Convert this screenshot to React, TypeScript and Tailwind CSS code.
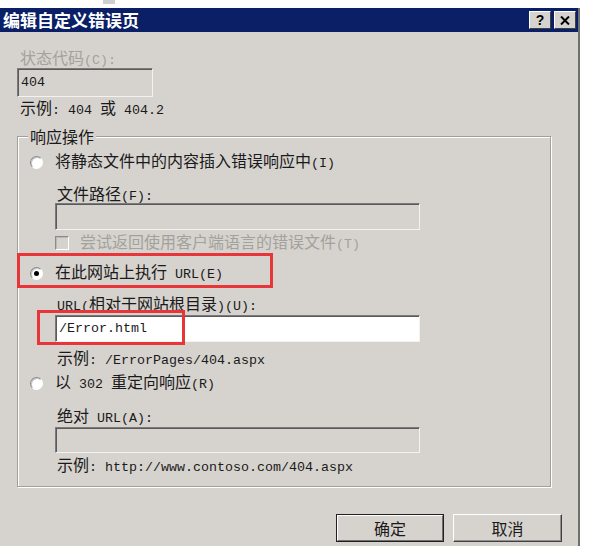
import type { ReactNode } from 'react'

const cjk = "font-['Noto_Sans_CJK_SC',sans-serif]"

function M({ children }: { children: ReactNode }) {
  return <span className="font-['Liberation_Mono',monospace] text-[13.33px]">{children}</span>
}

function Field({ className, children }: { className: string; children?: ReactNode }) {
  return (
    <div
      className={`flex items-center pl-[3px] border border-t-[#7a7a7a] border-l-[#7a7a7a] border-r-[#f2f2f2] border-b-[#f2f2f2] shadow-[inset_1px_1px_0_#5a5a5a] ${className}`}
    >
      {children}
    </div>
  )
}

function Radio({ checked }: { checked?: boolean }) {
  return (
    <span className="flex h-[13px] w-[13px] shrink-0 items-center justify-center rounded-full border border-t-[#8a8a8a] border-l-[#8a8a8a] border-r-white border-b-white bg-white shadow-[inset_1px_1px_0_#c8c8c8]">
      {checked && <span className="h-[5px] w-[5px] rounded-full bg-black" />}
    </span>
  )
}

function Line({ className, children }: { className: string; children: ReactNode }) {
  return <div className={`h-[18px] leading-[18px] whitespace-pre ${className}`}>{children}</div>
}

function Row({ className, children }: { className: string; children: ReactNode }) {
  return <div className={`flex h-[18px] items-center leading-[18px] whitespace-pre ${className}`}>{children}</div>
}

export default function App() {
  return (
    <div className={`h-[546px] w-[596px] overflow-hidden bg-white text-[16px] text-[#1a1a1a] ${cjk}`}>
      <div className="h-[8px]">
        <div className="ml-[103px] h-[4px] w-[12px] bg-[#cfcfcf]" />
      </div>

      <div className="h-[538px] w-[580px] border-r-2 border-r-[#6f6f6f] bg-[#d6d3ce]">
        {/* title bar */}
        <div className="flex h-[24px] items-center justify-between bg-[#0b1f66] pl-[3px] pr-[2px]">
          <span className="text-[17px] font-bold leading-[24px] text-white">编辑自定义错误页</span>
          <div className="flex gap-[3px]">
            <div className="flex h-[18px] w-[22px] items-center justify-center border border-t-white border-l-white border-r-[#404040] border-b-[#404040] bg-[#d6d3ce] font-['Liberation_Sans',sans-serif] text-[14px] font-bold leading-none text-black">
              ?
            </div>
            <div className="flex h-[18px] w-[22px] items-center justify-center border border-t-white border-l-white border-r-[#404040] border-b-[#404040] bg-[#d6d3ce]">
              <svg width="10" height="9" viewBox="0 0 10 9">
                <path d="M1 0.5 L9 8.5 M9 0.5 L1 8.5" stroke="#000" strokeWidth="2" />
              </svg>
            </div>
          </div>
        </div>

        {/* body */}
        <div className="pl-[17px] pt-[16px]">
          <Line className="ml-[3px] text-[#a4a19c]">
            状态代码<M>(C):</M>
          </Line>
          <Field className="mt-[2px] h-[29px] w-[136px] bg-[#d6d3ce]">
            <M>404</M>
          </Field>
          <Line className="mt-[1px] ml-[3px]">
            示例<M>: 404 </M>或<M> 404.2</M>
          </Line>

          {/* group box */}
          <div className="relative mt-[20px] w-[534px] border border-[#a19f9b] pb-[13px] pl-[12px] shadow-[1px_1px_0_#fff,inset_1px_1px_0_#fff]">
            <span className="absolute -top-[10px] left-[10px] bg-[#d6d3ce] px-[2px] leading-[18px]">响应操作</span>

            <Row className="mt-[16px] gap-[12px]">
              <Radio />
              <span>
                将静态文件中的内容插入错误响应中<M>(I)</M>
              </span>
            </Row>
            <Line className="mt-[13px] ml-[27px]">
              文件路径<M>(F):</M>
            </Line>
            <Field className="mt-[1px] ml-[25px] h-[27px] w-[365px] bg-[#d6d3ce]" />
            <Row className="mt-[4px] ml-[25px] gap-[11px] text-[#a4a19c]">
              <span className="h-[14px] w-[14px] shrink-0 border border-t-[#8a8a8a] border-l-[#8a8a8a] border-r-white border-b-white bg-[#d6d3ce] shadow-[inset_1px_1px_0_#b8b8b8]" />
              <span>
                尝试返回使用客户端语言的错误文件<M>(T)</M>
              </span>
            </Row>

            <Row className="mt-[12px] gap-[12px]">
              <Radio checked />
              <span>
                在此网站上执行<M> URL(E)</M>
              </span>
            </Row>
            <Line className="mt-[12px] ml-[27px]">
              <M>URL(</M>相对于网站根目录<M>)(U):</M>
            </Line>
            <Field className="mt-[3px] ml-[25px] h-[27px] w-[365px] bg-white">
              <M>/Error.html</M>
            </Field>
            <Line className="mt-[6px] ml-[27px]">
              示例<M>: /ErrorPages/404.aspx</M>
            </Line>

            <Row className="mt-[8px] gap-[12px]">
              <Radio />
              <span>
                以<M> 302 </M>重定向响应<M>(R)</M>
              </span>
            </Row>
            <Line className="mt-[14px] ml-[27px]">
              绝对<M> URL(A):</M>
            </Line>
            <Field className="mt-[3px] ml-[25px] h-[26px] w-[365px] bg-[#d6d3ce]" />
            <Line className="mt-[2px] ml-[27px]">
              示例<M>: http://www.contoso.com/404.aspx</M>
            </Line>

            {/* red annotation boxes */}
            <div className="pointer-events-none absolute left-[-1px] top-[116px] h-[35px] w-[256px] border-[3px] border-[#e8353a]" />
            <div className="pointer-events-none absolute left-[19px] top-[173px] h-[35px] w-[148px] border-[3px] border-[#e8353a]" />
          </div>

          {/* buttons */}
          <div className="mt-[27px] flex justify-end gap-[9px] pr-[16px]">
            <div className="flex h-[28px] w-[108px] border border-[#202020]">
              <div className="flex flex-1 items-center justify-center border border-t-white border-l-white border-r-[#707070] border-b-[#707070]">
                确定
              </div>
            </div>
            <div className="flex h-[28px] w-[109px] items-center justify-center border border-t-white border-l-white border-r-[#404040] border-b-[#404040] shadow-[inset_-1px_-1px_0_#909090]">
              取消
            </div>
          </div>
        </div>
      </div>
    </div>
  )
}
